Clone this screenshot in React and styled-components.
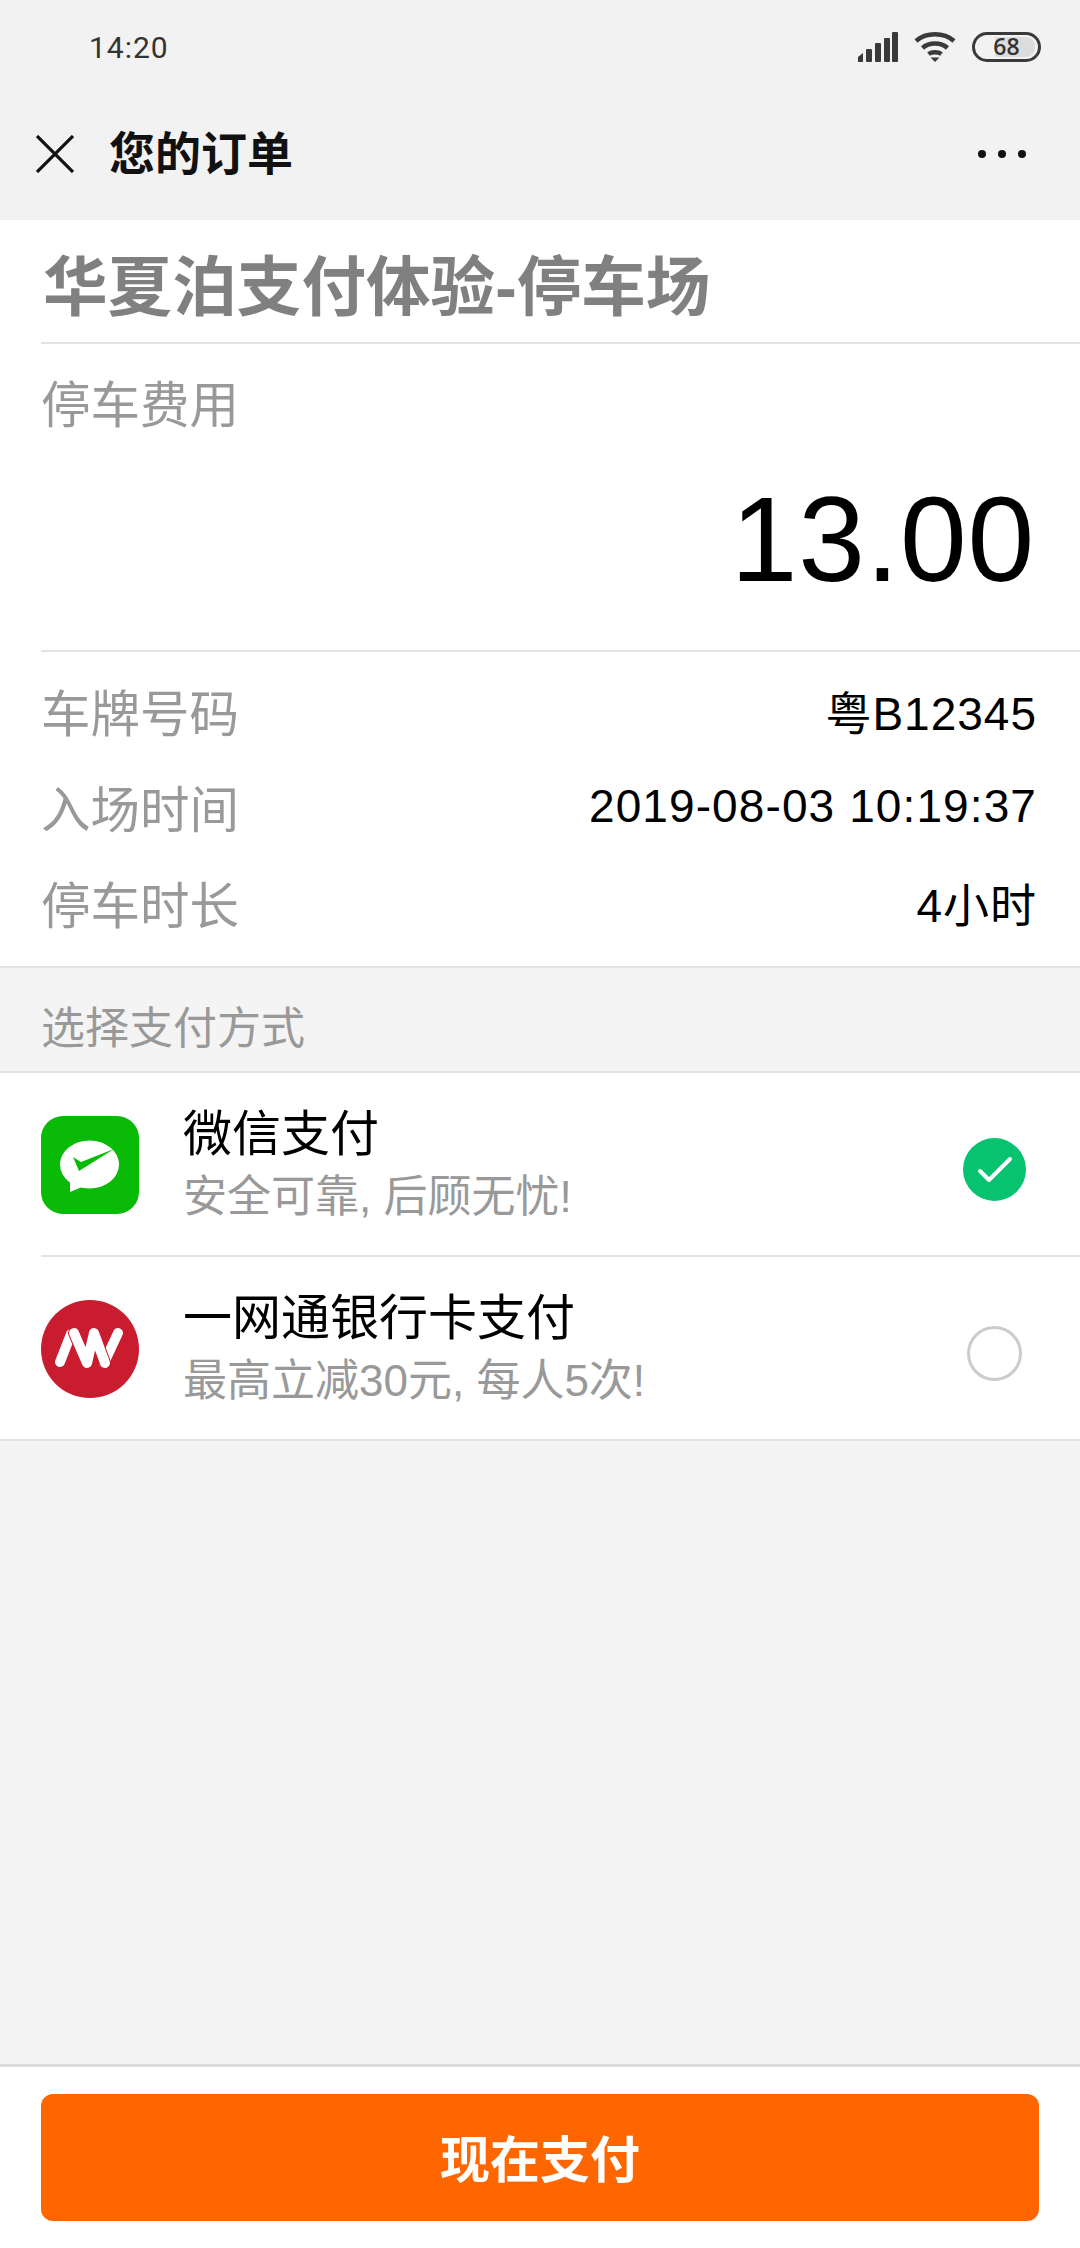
import React from 'react'
import styled, { createGlobalStyle } from 'styled-components'

const Global = createGlobalStyle`
html, body { margin: 0; padding: 0; background: #f4f4f4; }
* { box-sizing: border-box; }
`
const CJK = `"Liberation Sans", "Noto Sans CJK SC", sans-serif`

const Page = styled.div`
width: 1080px;
height: 2248px;
display: flex;
flex-direction: column;
font-family: ${CJK};
background: #f4f4f4;
`
const Header = styled.header`
height: 220px;
background: #f2f2f2;
display: flex;
flex-direction: column;
`
const StatusBar = styled.div`
height: 94px;
padding: 0 39px 0 89px;
display: flex;
align-items: center;
justify-content: space-between;
`
const Time = styled.span`
font-family: Roboto, sans-serif;
font-size: 30px;
color: #333;
letter-spacing: 1px;
`
const StatusIcons = styled.div`
display: flex;
align-items: center;
gap: 16px;
`
const Battery = styled.div`
width: 69px;
height: 30px;
border: 3.5px solid #3a3a3a;
border-radius: 15px;
padding: 2px 3px;
display: flex;
position: relative;
`
const BatteryFill = styled.div`
flex: 1;
margin-left: 17px;
background: #dcdcdc;
border-radius: 0 9px 9px 0;
`
const BatteryLevel = styled.span`
position: absolute;
top: 0;
left: 0;
right: 0;
text-align: center;
font-family: "Open Sans", sans-serif;
font-weight: 600;
font-size: 23px;
line-height: 23px;
color: #333;
`
const NavBar = styled.div`
flex: 1;
padding: 0 54px 6px 36px;
display: flex;
align-items: center;
`
const NavTitle = styled.h1`
margin: 0 0 8px 35px;
flex: 1;
font-size: 46px;
font-weight: 700;
color: #111;
`
const Dots = styled.div`
display: flex;
gap: 12px;
`
const Dot = styled.i`
width: 8px;
height: 8px;
border-radius: 50%;
background: #111;
`
const Card = styled.section`
background: #fff;
padding-left: 41px;
`
const ParkName = styled.div`
height: 124px;
border-bottom: 2px solid #e3e3e3;
font-size: 64.6px;
font-weight: 700;
line-height: 136px;
text-indent: 2px;
color: #808080;
white-space: nowrap;
`
const FeeBlock = styled.div`
height: 308px;
padding: 20px 45px 0 0;
border-bottom: 2px solid #e3e3e3;
display: flex;
flex-direction: column;
`
const Label = styled.span`
font-size: 49.5px;
color: #999;
`
const FeeLabel = styled(Label)`
line-height: 84px;
`
const Amount = styled.div`
font-size: 120px;
line-height: 140px;
letter-spacing: 0.8px;
text-align: right;
color: #000;
margin-top: 21px;
`
const Details = styled.div`
padding: 10px 43px 0 0;
height: 314px;
`
const DetailRow = styled.div`
height: 96px;
display: flex;
align-items: center;
justify-content: space-between;
`
const Value = styled.span`
font-size: 46px;
color: #000;
letter-spacing: ${p => p.$spacing || 0}px;
`
const SectionTitle = styled.div`
height: 107px;
padding: 10px 41px 0;
border-top: 2px solid #e3e3e3;
border-bottom: 2px solid #e3e3e3;
display: flex;
align-items: center;
font-size: 44px;
color: #999;
`
const Methods = styled.section`
background: #fff;
padding-left: 41px;
border-bottom: 2px solid #e3e3e3;
`
const Method = styled.div`
height: ${p => (p.$last ? 182 : 184)}px;
padding-right: 54px;
display: flex;
align-items: center;
border-bottom: ${p => (p.$last ? 'none' : '2px solid #e3e3e3')};
`
const LogoWrap = styled.div`
display: flex;
margin-top: 2px;
`
const MethodText = styled.div`
flex: 1;
margin: 3px 0 0 44px;
display: flex;
flex-direction: column;
`
const MethodName = styled.span`
font-size: 49px;
line-height: 62px;
color: #000;
`
const MethodNote = styled.span`
font-size: 44px;
line-height: 63px;
color: #999;
`
const Radio = styled.div`
width: 55px;
height: 55px;
margin: 10px 4px 0 0;
border: 3px solid #ccc;
border-radius: 50%;
`
const CheckWrap = styled.div`
display: flex;
margin-top: 10px;
`
const Spacer = styled.div`
flex: 1;
`
const Footer = styled.footer`
height: 184px;
background: #fff;
border-top: 3px solid #dcdcdc;
padding: 27px 41px 0;
`
const PayButton = styled.button`
width: 100%;
height: 127px;
padding: 0 0 3px;
border: none;
border-radius: 12px;
background: #ff6600;
color: #fff;
font-family: ${CJK};
font-size: 50px;
font-weight: 700;
`

const CloseIcon = () => (
    <svg width="38" height="38" viewBox="0 0 38 38" fill="none" stroke="#111" strokeWidth="3.2">
        <path d="M1 1 L37 37 M37 1 L1 37" />
    </svg>
)
const SignalIcon = () => (
    <svg width="40" height="30" viewBox="0 0 40 30" fill="#3a3a3a">
        <path d="M0 30V25L5 21V30Z" />
        <rect x="8" y="17" width="6" height="13" rx="1" />
        <rect x="17" y="11" width="6" height="19" rx="1" />
        <rect x="26" y="6" width="6" height="24" rx="1" />
        <rect x="34" y="0" width="6" height="30" rx="1" />
    </svg>
)
const WifiIcon = () => (
    <svg width="42" height="30" viewBox="0 0 42 30" fill="none" stroke="#3a3a3a" strokeWidth="4.5">
        <path d="M2 9 C12 0 30 0 40 9" />
        <path d="M8.5 16 C15 10 27 10 33.5 16" />
        <path d="M14.5 22 C18 19.5 24 19.5 27.5 22" />
        <path d="M21 30 L16.5 25.5 H25.5 Z" fill="#3a3a3a" stroke="none" />
    </svg>
)
const WechatLogo = () => (
    <svg width="98" height="98" viewBox="0 0 98 98">
        <rect width="98" height="98" rx="22" fill="#09bb07" />
        <ellipse cx="48.5" cy="48.5" rx="29.5" ry="24" fill="#fff" />
        <path d="M29 66L29 76L41 71Z" fill="#fff" />
        <path d="M32 41L38 55L73 33L40 46Z" fill="#09bb07" />
    </svg>
)
const BankLogo = () => (
    <svg width="98" height="98" viewBox="0 0 98 98" fill="none" strokeLinecap="round" strokeLinejoin="round">
        <circle cx="49" cy="49" r="49" fill="#c91c2f" />
        <path d="M19 62L30 34M63 63L77 33" stroke="#fff" strokeWidth="10" />
        <path d="M33 33L46 63L53 33L64 63" stroke="#c91c2f" strokeWidth="12" />
        <path d="M33 33L46 63L53 33L64 63" stroke="#fff" strokeWidth="10" />
    </svg>
)
const CheckedRadio = () => (
    <svg width="63" height="63" viewBox="0 0 63 63">
        <circle cx="31.5" cy="31.5" r="31.5" fill="#07c370" />
        <path d="M17 33L26 42L47 21" fill="none" stroke="#fff" strokeWidth="4" strokeLinecap="round" strokeLinejoin="round" />
    </svg>
)

const details = [
    { label: '车牌号码', value: '粤B12345', spacing: 1 },
    { label: '入场时间', value: '2019-08-03 10:19:37', spacing: 1.1 },
    { label: '停车时长', value: '4小时', spacing: 1 },
]

const App = () => {
    return (
        <Page>
            <Global />
            <Header>
                <StatusBar>
                    <Time>14:20</Time>
                    <StatusIcons>
                        <SignalIcon />
                        <WifiIcon />
                        <Battery>
                            <BatteryFill />
                            <BatteryLevel>68</BatteryLevel>
                        </Battery>
                    </StatusIcons>
                </StatusBar>
                <NavBar>
                    <CloseIcon />
                    <NavTitle>您的订单</NavTitle>
                    <Dots><Dot /><Dot /><Dot /></Dots>
                </NavBar>
            </Header>
            <Card>
                <ParkName>华夏泊支付体验-停车场</ParkName>
                <FeeBlock>
                    <FeeLabel>停车费用</FeeLabel>
                    <Amount>13.00</Amount>
                </FeeBlock>
                <Details>
                    {details.map((d) => (
                        <DetailRow key={d.label}>
                            <Label>{d.label}</Label>
                            <Value $spacing={d.spacing}>{d.value}</Value>
                        </DetailRow>
                    ))}
                </Details>
            </Card>
            <SectionTitle>选择支付方式</SectionTitle>
            <Methods>
                <Method>
                    <LogoWrap><WechatLogo /></LogoWrap>
                    <MethodText>
                        <MethodName>微信支付</MethodName>
                        <MethodNote>安全可靠, 后顾无忧!</MethodNote>
                    </MethodText>
                    <CheckWrap><CheckedRadio /></CheckWrap>
                </Method>
                <Method $last>
                    <LogoWrap><BankLogo /></LogoWrap>
                    <MethodText>
                        <MethodName>一网通银行卡支付</MethodName>
                        <MethodNote>最高立减30元, 每人5次!</MethodNote>
                    </MethodText>
                    <Radio />
                </Method>
            </Methods>
            <Spacer />
            <Footer>
                <PayButton>现在支付</PayButton>
            </Footer>
        </Page>
    )
}
export default App
